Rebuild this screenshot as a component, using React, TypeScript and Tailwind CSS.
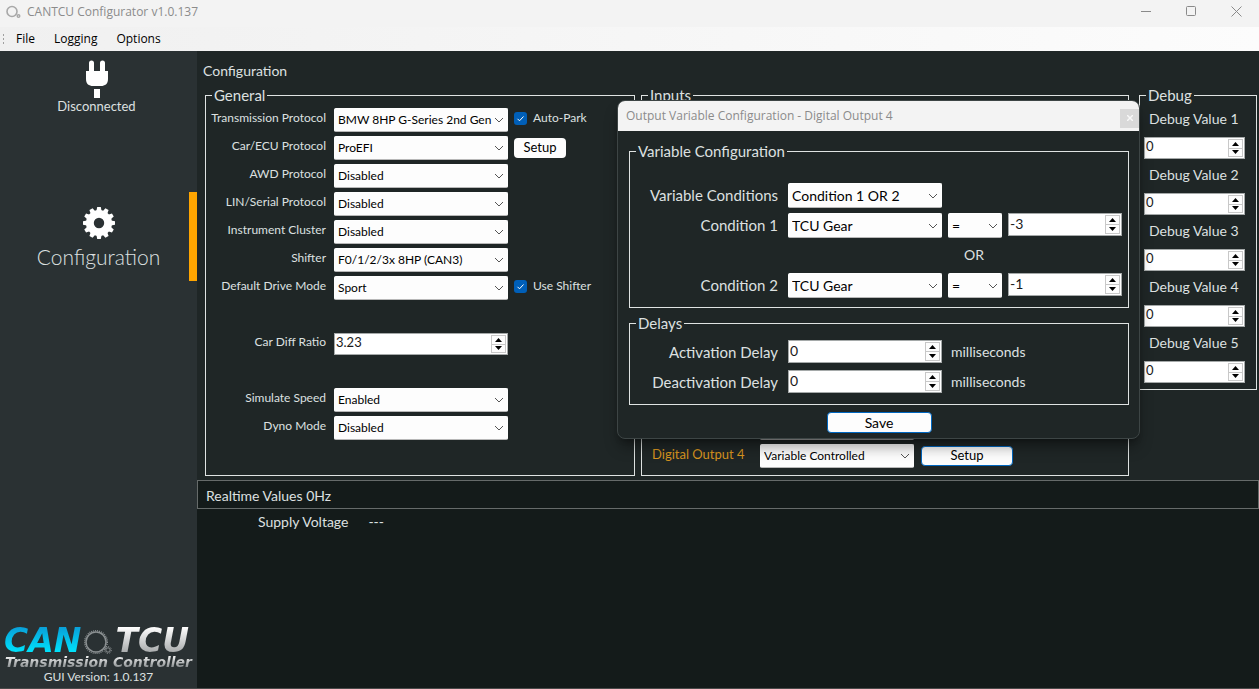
import type { ReactNode } from 'react';

const outputs = ['Disabled', 'Enabled', 'Variable Controlled'];

const general = [
  { label: 'Transmission Protocol', value: 'BMW 8HP G-Series 2nd Gen', check: 'Auto-Park' },
  { label: 'Car/ECU Protocol', value: 'ProEFI', setup: true },
  { label: 'AWD Protocol', value: 'Disabled' },
  { label: 'LIN/Serial Protocol', value: 'Disabled' },
  { label: 'Instrument Cluster', value: 'Disabled' },
  { label: 'Shifter', value: 'F0/1/2/3x 8HP (CAN3)' },
  { label: 'Default Drive Mode', value: 'Sport', check: 'Use Shifter' },
];

const simulation = [
  { label: 'Simulate Speed', value: 'Enabled' },
  { label: 'Dyno Mode', value: 'Disabled' },
];

function Group({ title, className, children }: { title: string; className: string; children: ReactNode }) {
  return (
    <fieldset className={`min-w-0 border border-[#dfe3e2] ${className}`}>
      <legend className="ml-1.5 h-4 px-0.5 text-[15px] leading-4">{title}</legend>
      {children}
    </fieldset>
  );
}

function Select({ id, value, options = [], label, className = '' }: { id?: string; value: string; options?: string[]; label?: string; className?: string }) {
  return (
    <span className={`grid shrink-0 items-center ${className}`}>
      <select
        id={id}
        aria-label={label}
        defaultValue={value}
        className="col-start-1 row-start-1 h-full w-full appearance-none rounded-xs border border-white border-b-[#b8b8b8] bg-[#fdfdfd] pl-[3px] text-black"
      >
        {[value, ...options.filter((o) => o !== value)].map((o) => (
          <option key={o}>{o}</option>
        ))}
      </select>
      <svg viewBox="0 0 10 6" className="pointer-events-none col-start-1 row-start-1 mr-1 h-1.5 w-2.5 justify-self-end" fill="none" stroke="#555">
        <path d="M1 1l4 4 4-4" />
      </svg>
    </span>
  );
}

function NumberBox({ id, value, label, className = '' }: { id?: string; value: string; label?: string; className?: string }) {
  return (
    <span className={`flex shrink-0 border border-[#a5a9a9] bg-white p-px ${className}`}>
      <input id={id} aria-label={label} defaultValue={value} className="min-w-0 flex-1 bg-white pb-0.5 text-[#1a1a1a] outline-none" />
      <span className="flex w-[15px] flex-col">
        <button type="button" aria-label="Increase" className="flex flex-1 items-center justify-center border border-[#c8c8c8] bg-[#fdfdfd]">
          <svg viewBox="0 0 7 4" className="h-1 w-[7px]"><path d="M0 4L3.5 0 7 4z" /></svg>
        </button>
        <button type="button" aria-label="Decrease" className="flex flex-1 items-center justify-center border border-t-0 border-[#c8c8c8] bg-[#fdfdfd]">
          <svg viewBox="0 0 7 4" className="h-1 w-[7px]"><path d="M0 0L3.5 4 7 0z" /></svg>
        </button>
      </span>
    </span>
  );
}

function Check({ label }: { label: string }) {
  return (
    <label className="flex items-center gap-1.5 pb-1">
      <span className="grid">
        <input type="checkbox" defaultChecked className="col-start-1 row-start-1 size-[13px] appearance-none rounded-[3px] bg-[#005fb8]" />
        <svg viewBox="0 0 13 13" className="pointer-events-none col-start-1 row-start-1 size-[13px]" fill="none" stroke="#fff">
          <path d="M3.5 6.8l2 2 4-4.3" />
        </svg>
      </span>
      {label}
    </label>
  );
}

function GeneralRow({ label, children }: { label: string; children: ReactNode }) {
  return (
    <div className="flex h-6 items-center">
      <label htmlFor={label} className="mr-2 w-[120px] shrink-0 pb-1 text-right">{label}</label>
      {children}
    </div>
  );
}

function Gear({ className }: { className: string }) {
  const teeth = Array.from({ length: 12 }, (_, i) => i * 30);
  return (
    <svg viewBox="0 0 32 32" className={className} fill="#fff">
      <path fillRule="evenodd" d="M16 3a13 13 0 100 26 13 13 0 000-26zm0 7.8a5.2 5.2 0 110 10.4 5.2 5.2 0 010-10.4z" />
      {teeth.map((a) => (
        <path key={a} d="M13.4 4l.8-4h3.6l.8 4z" transform={`rotate(${a} 16 16)`} />
      ))}
    </svg>
  );
}

function Sidebar() {
  return (
    <aside className="flex w-[197px] shrink-0 flex-col bg-[#2a3133]">
      <div className="flex flex-col items-center pt-[9px] pr-1 text-[13px]">
        <svg viewBox="0 0 24 38" className="h-[38px] w-6" fill="#fff">
          <path d="M4 11V3a2.5 2.5 0 015 0v8h6V3a2.5 2.5 0 015 0v8h3v8c0 5-3 7-7 7H8c-4 0-7-2-7-7v-8zM9 29h6v9H9z" />
        </svg>
        <span className="leading-4">Disconnected</span>
      </div>
      <button type="button" className="mt-[78px] flex h-[89px] flex-col items-center border-r-8 border-[#ffa500] pt-[15px] pl-2 text-[21px] font-light">
        <Gear className="size-8" />
        <span className="mt-1 leading-7">Configuration</span>
      </button>
      <div className="mt-auto px-1 pb-[3px] text-center">
        <div className="flex h-7 items-center justify-between font-['DejaVu_Sans'] text-[33px] leading-7 font-bold italic">
          <span className="bg-gradient-to-b from-[#0a9fd8] to-[#00eaff] bg-clip-text text-transparent">CAN</span>
          <svg viewBox="0 0 28 26" className="mt-1 h-[26px] w-7" fill="none" stroke="#8b9092">
            <circle cx="12" cy="12" r="10" strokeWidth="1.5" />
            <circle cx="12" cy="12" r="11.3" strokeWidth="1.4" strokeDasharray="1 1" />
            <circle cx="24" cy="20" r="2.2" />
            <circle cx="24" cy="20" r="3.4" strokeDasharray="1.3 1.3" />
          </svg>
          <span className="bg-gradient-to-b from-white to-[#a0a3a4] bg-clip-text pr-1 text-transparent">TCU</span>
        </div>
        <p className="bg-gradient-to-b from-white to-[#7c8183] bg-clip-text font-['DejaVu_Sans'] text-sm leading-[14px] font-bold whitespace-nowrap text-transparent italic">
          Transmission Controller
        </p>
        <p className="text-xs leading-4">GUI Version: 1.0.137</p>
      </div>
    </aside>
  );
}

function ConditionRow({ name, value }: { name: string; value: string }) {
  return (
    <div className="flex h-[25px] items-start">
      <label htmlFor={name} className="mr-2.5 w-[148px] text-right text-[15px] leading-6">{name}</label>
      <Select id={name} value="TCU Gear" className="h-[25px] w-[154px]" />
      <Select label={`${name} operator`} value="=" options={['<', '>']} className="ml-1.5 h-[25px] w-[54px]" />
      <NumberBox label={`${name} value`} value={value} className="ml-1.5 h-[23px] w-[114px]" />
    </div>
  );
}

function OutputDialog() {
  return (
    <section role="dialog" aria-label="Output Variable Configuration" className="absolute top-[49px] left-[420px] w-[523px] overflow-hidden rounded-lg border border-[#3d4545] bg-[#1f2626] text-sm shadow-lg shadow-black/40">
      <header className="flex h-[30px] items-center justify-between bg-[#f3f3f3] pl-2 font-['Open_Sans'] text-xs text-[#8b8b8b]">
        <h2>Output Variable Configuration - Digital Output 4</h2>
        <button type="button" aria-label="Close" className="mt-1 flex size-[19px] items-center justify-center bg-[#d9d9d9]">
          <svg viewBox="0 0 6 6" className="size-1.5" stroke="#f8f8f8" strokeWidth="1.5"><path d="M0 0l6 6M6 0L0 6" /></svg>
        </button>
      </header>
      <div className="flex flex-col pt-3 pr-[10px] pb-[5px] pl-[11px]">
        <Group title="Variable Configuration" className="pb-[9px]">
          <div className="flex flex-col gap-[5px] pt-6">
            <div className="flex h-[25px] items-start">
              <label htmlFor="conditions" className="mr-2.5 w-[148px] text-right text-[15px] leading-6">Variable Conditions</label>
              <Select id="conditions" value="Condition 1 OR 2" className="h-[25px] w-[154px]" />
            </div>
            <ConditionRow name="Condition 1" value="-3" />
            <p className="h-[25px] pl-[334px] leading-6">OR</p>
            <ConditionRow name="Condition 2" value="-1" />
          </div>
        </Group>
        <Group title="Delays" className="mt-[7px] pb-[11px]">
          <div className="flex flex-col gap-[7px] pt-[9px]">
            {['Activation Delay', 'Deactivation Delay'].map((d) => (
              <div key={d} className="flex h-[23px] items-center">
                <label htmlFor={d} className="mr-2.5 w-[148px] text-right text-[15px] leading-6">{d}</label>
                <NumberBox id={d} value="0" className="h-[23px] w-[154px]" />
                <span className="ml-[9px]">milliseconds</span>
              </div>
            ))}
          </div>
        </Group>
        <button type="button" className="mt-[7px] h-[21px] w-[105px] self-center rounded border border-[#0067c0] bg-[#fdfdfd] text-black">Save</button>
      </div>
    </section>
  );
}

export default function App() {
  return (
    <div className="flex min-h-screen flex-col border-b border-[#4a4a4a] bg-[#1f2626] font-[Lato,sans-serif] text-[#dde0e0]">
      <header className="flex h-[27px] items-center justify-between bg-[#f3f3f3] pb-1 pl-1.5 font-['Open_Sans'] text-xs text-[#8b8b8b]">
        <div className="flex items-center gap-1.5">
          <svg viewBox="0 0 15 14" className="h-3.5 w-[15px]" fill="none" stroke="#a8a8a8">
            <circle cx="6" cy="6.5" r="5" strokeWidth="1.6" />
            <circle cx="12.5" cy="11" r="1.3" strokeWidth="1.4" />
          </svg>
          <h1>CANTCU Configurator v1.0.137</h1>
        </div>
        <div className="flex">
          <button type="button" aria-label="Minimize" className="flex w-[45px] justify-center">
            <svg viewBox="0 0 11 11" className="size-[11px]" fill="none" stroke="#8a8a8a"><path d="M0 5.5h10" /></svg>
          </button>
          <button type="button" aria-label="Maximize" className="flex w-[45px] justify-center">
            <svg viewBox="0 0 11 11" className="size-[11px]" fill="none" stroke="#8a8a8a"><rect x=".5" y=".5" width="9" height="9" rx="1" /></svg>
          </button>
          <button type="button" aria-label="Close" className="flex w-[45px] justify-center">
            <svg viewBox="0 0 11 11" className="size-[11px]" fill="none" stroke="#8a8a8a"><path d="M.5.5l10 10M10.5.5l-10 10" /></svg>
          </button>
        </div>
      </header>

      <nav className="flex h-6 items-center bg-gradient-to-r from-[#f0f0f0] to-[#fcfcfc] pl-0.5 font-['Open_Sans'] text-xs text-black">
        <svg viewBox="0 0 3 12" className="h-3 w-[3px]" fill="#a0a0a0">
          <path d="M1 1h1v2H1zM1 5h1v2H1zM1 9h1v2H1z" />
        </svg>
        <div className="ml-[11px] flex gap-[19px]">
          <button type="button">File</button>
          <button type="button">Logging</button>
          <button type="button">Options</button>
        </div>
      </nav>

      <div className="flex flex-1">
        <Sidebar />

        <main className="relative flex min-w-0 flex-1 flex-col text-xs">
          <h2 className="h-9 pt-1 pl-1.5 text-sm leading-8">Configuration</h2>

          <div className="flex items-start pr-0.5 pb-1 pl-2">
            <Group title="General" className="w-[430px] shrink-0 pb-[35px]">
              <div className="flex flex-col gap-1 pt-[5px]">
                {general.map((row) => (
                  <GeneralRow key={row.label} label={row.label}>
                    <Select id={row.label} value={row.value} className="mr-1.5 h-6 w-[174px]" />
                    {row.check && <Check label={row.check} />}
                    {row.setup && <button type="button" className="h-5 w-[52px] rounded bg-[#fdfdfd] text-[13px] text-black">Setup</button>}
                  </GeneralRow>
                ))}
                <div className="py-7">
                  <GeneralRow label="Car Diff Ratio">
                    <NumberBox id="Car Diff Ratio" value="3.23" className="h-[22px] w-[174px] text-[13px]" />
                  </GeneralRow>
                </div>
                {simulation.map((row) => (
                  <GeneralRow key={row.label} label={row.label}>
                    <Select id={row.label} value={row.value} className="h-6 w-[174px]" />
                  </GeneralRow>
                ))}
              </div>
            </Group>

            <Group title="Inputs" className="ml-1.5 flex-1 self-stretch">
              <div className="flex h-full flex-col justify-end gap-1 pb-[7px]">
                <Select label="Digital Output 3" value="" className="ml-[118px] h-6 w-[154px]" />
                <div className="flex h-6 items-center">
                  <label htmlFor="output4" className="w-[118px] pb-0.5 pl-2.5 text-[13px] text-[#d9951f]">Digital Output 4</label>
                  <Select id="output4" value="Variable Controlled" options={outputs} className="h-6 w-[154px]" />
                  <button type="button" className="ml-[7px] h-5 w-[92px] rounded border border-[#0067c0] bg-[#fdfdfd] text-[13px] text-black">Setup</button>
                </div>
              </div>
            </Group>

            <Group title="Debug" className="ml-[10px] w-[118px] shrink-0 pb-[6px]">
              {[1, 2, 3, 4, 5].map((n) => (
                <div key={n} className="flex flex-col pl-1 text-[13px]">
                  <label htmlFor={`debug${n}`} className="h-[34px] pl-[5px] text-sm leading-8">Debug Value {n}</label>
                  <NumberBox id={`debug${n}`} value="0" className="h-[22px] w-[101px]" />
                </div>
              ))}
            </Group>
          </div>

          <section className="flex-1 bg-[#141b1a] text-sm">
            <h3 className="h-[29px] border border-[#666b6a] pl-2 leading-[29px]">Realtime Values 0Hz</h3>
            <dl className="flex gap-5 pl-[61px] leading-[26px]">
              <dt>Supply Voltage</dt>
              <dd>---</dd>
            </dl>
          </section>

          <OutputDialog />
        </main>
      </div>
    </div>
  );
}
